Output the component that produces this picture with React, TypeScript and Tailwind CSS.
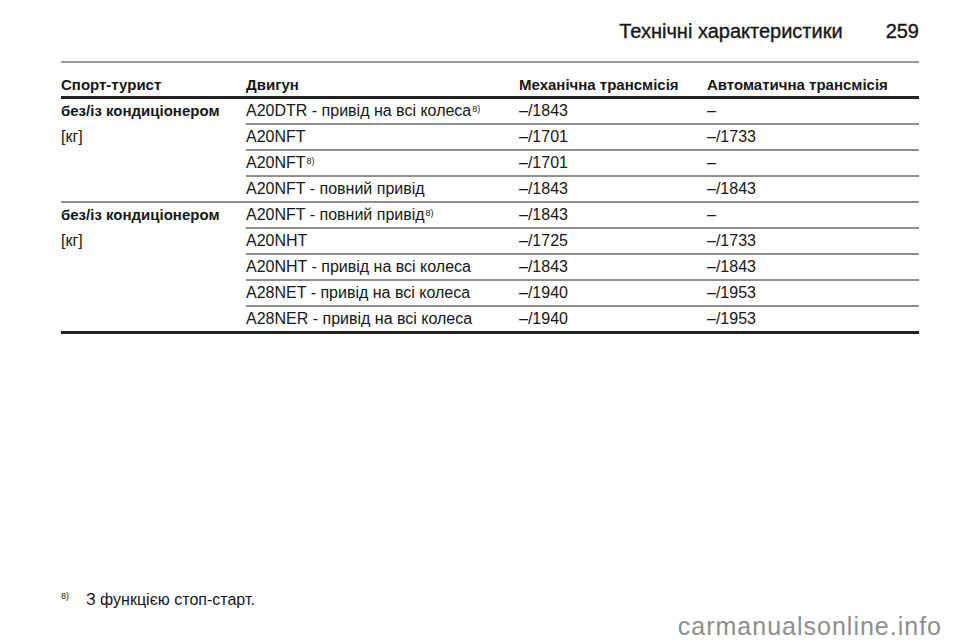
import React from "react";

interface EngineRow {
  engine: string;
  note?: boolean;
  manual: string;
  auto: string;
}

const groups: EngineRow[][] = [
  [
    { engine: "A20DTR - привід на всі колеса", note: true, manual: "–/1843", auto: "–" },
    { engine: "A20NFT", manual: "–/1701", auto: "–/1733" },
    { engine: "A20NFT", note: true, manual: "–/1701", auto: "–" },
    { engine: "A20NFT - повний привід", manual: "–/1843", auto: "–/1843" },
  ],
  [
    { engine: "A20NFT - повний привід", note: true, manual: "–/1843", auto: "–" },
    { engine: "A20NHT", manual: "–/1725", auto: "–/1733" },
    { engine: "A20NHT - привід на всі колеса", manual: "–/1843", auto: "–/1843" },
    { engine: "A28NET - привід на всі колеса", manual: "–/1940", auto: "–/1953" },
    { engine: "A28NER - привід на всі колеса", manual: "–/1940", auto: "–/1953" },
  ],
];

const Note = () => (
  <sup className="ml-[1px] text-[9px]">8)</sup>
);

export default function App() {
  return (
    <div
      className="flex h-[642px] w-[960px] flex-col bg-white pl-[61px] pr-[41px] text-[#161616]"
      style={{ fontFamily: '"Liberation Sans", Arial, sans-serif' }}
    >
      {/* page header */}
      <div className="flex items-baseline justify-end gap-[43px] pt-[21px] text-[20px] leading-[20px] [-webkit-text-stroke:0.35px_#161616]">
        <span>Технічні характеристики</span>
        <span>259</span>
      </div>
      <div className="mt-[20px] border-t-2 border-[#9a9a9a]"></div>

      {/* table head */}
      <div className="flex h-[36px] items-end border-b-[3px] border-[#222] text-[15px] font-bold leading-[22px]">
        <div className="w-[185px]">Спорт-турист</div>
        <div className="w-[273px]">Двигун</div>
        <div className="w-[188px]">Механічна трансмісія</div>
        <div className="flex-1">Автоматична трансмісія</div>
      </div>

      {/* table body */}
      {groups.map((rows, gi) => (
        <div
          key={gi}
          className={
            gi === groups.length - 1
              ? "flex border-b-[3px] border-[#222] text-[16px]"
              : "flex border-b-2 border-[#8f8f8f] text-[16px]"
          }
        >
          <div className="flex w-[185px] flex-col gap-[2px]">
            <div className="h-[24px] text-[15px] font-bold leading-[24px]">без/із кондиціонером</div>
            <div className="h-[24px] leading-[24px]">[кг]</div>
          </div>
          <div className="flex flex-1 flex-col">
            {rows.map((r, i) => (
              <div
                key={i}
                className={
                  i === rows.length - 1
                    ? "flex h-[24px] leading-[24px]"
                    : "flex h-[26px] border-b-2 border-[#8f8f8f] leading-[24px]"
                }
              >
                <div className="w-[273px]">
                  {r.engine}
                  {r.note && <Note />}
                </div>
                <div className="w-[188px]">{r.manual}</div>
                <div className="flex-1">{r.auto}</div>
              </div>
            ))}
          </div>
        </div>
      ))}

      {/* footnote + watermark */}
      <div className="mt-auto flex flex-col pb-[3px]">
        <div className="flex items-start text-[16px] leading-[20px]">
          <span className="mt-[2px] w-[25px] text-[9px] leading-[9px]">8)</span>
          <span>З функцією стоп-старт.</span>
        </div>
        <div className="-mr-[23px] mt-[4px] flex justify-end text-[25px] leading-[25px] tracking-[1px] text-[#8e8e8e]">
          carmanualsonline.info
        </div>
      </div>
    </div>
  );
}
